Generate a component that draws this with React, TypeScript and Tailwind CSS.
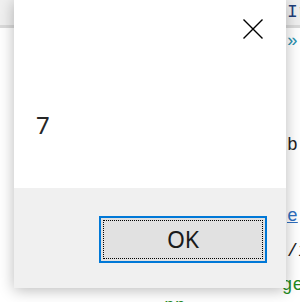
function CodeLine({ text, color, height, underline = false }: { text: string; color: string; height: string; underline?: boolean }) {
  return (
    <div className={`flex items-center pl-[287px] ${height}`}>
      <span className={`${color} ${underline ? 'underline' : ''} whitespace-nowrap`}>{text}</span>
    </div>
  );
}

export default function App() {
  return (
    <div className="relative w-[300px] h-[302px] overflow-hidden bg-white font-['Liberation_Mono',monospace] text-[18px]">
      {/* editor behind the dialog */}
      <div className="flex flex-col">
        <div className="flex items-center h-[28px] pl-[287px] bg-[#f0f0f0] border-b-[3px] border-[#dadada]">
          <span className="text-[#1f3f7a]">Ir</span>
        </div>
        <CodeLine text="»" color="text-[#2b91af]" height="h-[26px]" />
        <div className="h-[78px]" />
        <CodeLine text="b" color="text-[#1e1e1e]" height="h-[26px]" />
        <div className="h-[48px]" />
        <CodeLine text="e" color="text-[#2f6fbf]" height="h-[20px]" underline />
        <div className="h-[14px]" />
        <CodeLine text="/i" color="text-[#1e1e1e]" height="h-[22px]" />
        <div className="h-[10px]" />
        <div className="flex items-start h-[40px] pl-[164px] gap-[96px] text-[#1d8a1d]">
          <span className="pt-[21px]">pp</span>
          <span>ge</span>
        </div>
      </div>

      {/* message box */}
      <div className="absolute left-[14px] top-0 w-[272px] h-[288px] flex flex-col bg-white shadow-[0_2px_14px_rgba(0,0,0,0.28)] font-['Noto_Sans',sans-serif]">
        <div className="h-[188px] flex flex-col">
          <div className="flex justify-end pt-[19px] pr-[23px]">
            <svg width="20" height="20" viewBox="0 0 20 20" className="text-black">
              <path d="M0.5 0.5 L19.5 19.5 M19.5 0.5 L0.5 19.5" stroke="currentColor" strokeWidth="1.4" fill="none" />
            </svg>
          </div>
          <div className="pt-[70px] pl-[22px] text-[24px] leading-[32px] text-[#262626]">7</div>
        </div>
        <div className="flex-1 bg-[#f0f0f0] flex justify-end items-start pt-[28px] pr-[19px]">
          <button className="w-[168px] h-[47px] border-2 border-[#0078d7] bg-[#e1e1e1] p-[2px]">
            <div className="w-full h-full border border-dotted border-black flex items-center justify-center text-[23px] leading-none text-[#1a1a1a]">
              OK
            </div>
          </button>
        </div>
      </div>
    </div>
  );
}
